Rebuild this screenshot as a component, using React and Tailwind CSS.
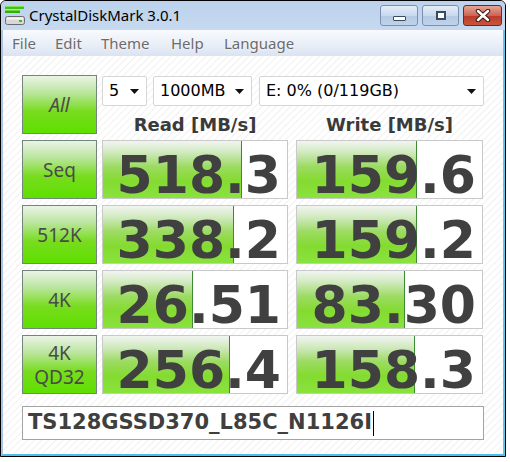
import React from "react";

const rows = [
  { label: ["Seq"], read: "518.3", rw: 139, write: "159.6", ww: 120 },
  { label: ["512K"], read: "338.2", rw: 131, write: "159.2", ww: 120 },
  { label: ["4K"], read: "26.51", rw: 90, write: "83.30", ww: 108 },
  { label: ["4K", "QD32"], read: "256.4", rw: 127, write: "158.3", ww: 118 },
];

function LabelBtn({ children, italic }) {
  return (
    <div
      className={`w-[75px] h-[59px] shrink-0 border border-[#74857a] bg-[linear-gradient(to_bottom,#eaf4e6_0%,#bde6a2_28%,#78dc1e_62%,#5ee000_100%)] flex flex-col items-center justify-center text-[19px] leading-[24px] text-[#4a4a4a] ${italic ? "italic" : ""}`}
      style={{ fontFamily: '"Noto Sans", "Liberation Sans", sans-serif' }}
    >
      {children}
    </div>
  );
}

function ValueBox({ value, width, w }) {
  return (
    <div className={`${w} h-[59px] shrink-0 relative border border-[#c9c9c9] bg-white`}>
      <div
        className="absolute left-0 top-0 bottom-0 border-r border-[#3f8a34] bg-[linear-gradient(to_bottom,#f2f5f1_0%,#d0e9be_20%,#9cdb62_45%,#84db30_70%,#8ae23e_100%)]"
        style={{ width: `${width}px` }}
      />
      <div
        className="relative h-full flex justify-end items-start pt-[8px] pr-[6px] text-[52px] leading-none font-bold text-[#404040]"
        style={{ fontFamily: '"DejaVu Sans", Verdana, sans-serif' }}
      >
        {value}
      </div>
    </div>
  );
}

function Arrow() {
  return (
    <svg width="9" height="5" viewBox="0 0 9 5" className="shrink-0">
      <path d="M0 0 H9 L4.5 5 Z" fill="#111" />
    </svg>
  );
}

function Dropdown({ text, w }) {
  return (
    <div
      className={`${w} h-[30px] shrink-0 bg-white border border-[#d6d6d6] rounded-[2px] flex items-center justify-between pl-[6px] pr-[7px] text-[16px] text-black`}
      style={{ fontFamily: '"DejaVu Sans", Verdana, sans-serif' }}
    >
      <span>{text}</span>
      <Arrow />
    </div>
  );
}

function AppIcon() {
  return (
    <svg width="20" height="20" viewBox="0 0 20 20" className="shrink-0">
      <rect x="0" y="1" width="19" height="3" fill="#3fc21a" />
      <rect x="0" y="1" width="19" height="1" fill="#7fe050" />
      <rect x="0" y="5" width="15" height="3" fill="#2fae12" />
      <rect x="0" y="5" width="15" height="1" fill="#6fd640" />
      <rect x="0.5" y="11.5" width="19" height="8" rx="2" fill="#d8d8d8" stroke="#6a6a6a" />
      <rect x="2" y="12.5" width="16" height="2" fill="#f4f4f4" />
      <rect x="14" y="15" width="3" height="2" fill="#35c21a" />
    </svg>
  );
}

export default function App() {
  return (
    <div className="w-[510px] h-[462px] bg-white relative overflow-hidden">
      <div className="w-[506px] h-[457px] border border-black rounded-t-[6px] overflow-hidden flex flex-col bg-[#c2d6ee]">
        {/* Title bar */}
        <div className="h-[29px] shrink-0 flex items-start bg-[linear-gradient(to_bottom,#bcd2ec,#c6d9ef)]">
          <div className="pl-[4px] pt-[4px]">
            <AppIcon />
          </div>
          <div
            className="ml-[4px] mt-[4px] text-[15px] leading-[20px] text-black"
            style={{ fontFamily: '"Noto Sans", "Open Sans", sans-serif' }}
          >
            CrystalDiskMark 3.0.1
          </div>
          <div className="ml-auto mr-[3px] mt-[4px] flex gap-[4px]">
            <div className="w-[38px] h-[21px] rounded-[3px] border border-[#7b90ae] bg-[linear-gradient(to_bottom,#e4edf8,#c9d9ed_50%,#b3c9e4_51%,#bfd3ea)] flex items-end justify-center pb-[4px]">
              <div className="w-[13px] h-[5px] bg-white border border-[#3a4a60] rounded-[1px]" />
            </div>
            <div className="w-[37px] h-[21px] rounded-[3px] border border-[#7b90ae] bg-[linear-gradient(to_bottom,#e4edf8,#c9d9ed_50%,#b3c9e4_51%,#bfd3ea)] flex items-center justify-center">
              <div className="w-[10px] h-[9px] border-[2px] border-[#3a4a60] bg-white" />
            </div>
            <div className="w-[39px] h-[21px] rounded-[3px] border border-[#6a2a22] bg-[linear-gradient(to_bottom,#e3a597,#cf6454_50%,#b93a28_51%,#c8553f)] flex items-center justify-center">
              <svg width="16" height="13" viewBox="0 0 16 13">
                <path d="M3 2 L13 11 M13 2 L3 11" stroke="#3a1a16" strokeWidth="4.5" strokeLinecap="round" />
                <path d="M3 2 L13 11 M13 2 L3 11" stroke="#ffffff" strokeWidth="2.5" strokeLinecap="round" />
              </svg>
            </div>
          </div>
        </div>
        {/* Menu + client with frame */}
        <div className="flex-1 flex flex-col border-l-2 border-l-[#a9c3e4] border-r-2 border-r-[#5cc6ec] border-b-2 border-b-[#4cc0ea]">
          <div
            className="h-[26px] shrink-0 flex items-center pl-[9px] text-[15px] text-[#6b6b6b] bg-[linear-gradient(to_bottom,#f8fafd,#e8eef7_60%,#dbe3f1)] [text-shadow:0_0_2px_#ffffff]"
            style={{ fontFamily: '"Noto Sans", "Open Sans", sans-serif' }}
          >
            <span className="w-[43px]">File</span>
            <span className="w-[46px]">Edit</span>
            <span className="w-[70px]">Theme</span>
            <span className="w-[53px]">Help</span>
            <span>Language</span>
          </div>
          <div className="flex-1 bg-[repeating-linear-gradient(135deg,#ffffff_0px,#ffffff_3px,#f1f1f1_4px,#ffffff_5px)] pt-[19px] pl-[19px] flex flex-col">
            <div className="flex flex-col gap-[6px]">
              {/* Top row */}
              <div className="flex gap-[5px]">
                <LabelBtn italic>All</LabelBtn>
                <div className="flex flex-col">
                  <div className="flex mt-[1px] h-[30px]">
                    <Dropdown text="5" w="w-[45px]" />
                    <div className="w-[6px]" />
                    <Dropdown text="1000MB" w="w-[99px]" />
                    <div className="w-[7px]" />
                    <Dropdown text="E: 0% (0/119GB)" w="w-[225px]" />
                  </div>
                  <div
                    className="flex h-[28px] pt-[10px] text-[18px] leading-none font-bold text-[#3a3a3a]"
                    style={{ fontFamily: '"DejaVu Sans", Verdana, sans-serif' }}
                  >
                    <div className="w-[186px] text-center">Read [MB/s]</div>
                    <div className="w-[8px]" />
                    <div className="w-[187px] text-center">Write [MB/s]</div>
                  </div>
                </div>
              </div>
              {rows.map((r, i) => (
                <div key={i} className="flex">
                  <LabelBtn>
                    {r.label.map((l) => (
                      <span key={l}>{l}</span>
                    ))}
                  </LabelBtn>
                  <div className="w-[5px]" />
                  <ValueBox value={r.read} width={r.rw} w="w-[186px]" />
                  <div className="w-[8px]" />
                  <ValueBox value={r.write} width={r.ww} w="w-[187px]" />
                </div>
              ))}
            </div>
            <div
              className="mt-[12px] w-[462px] h-[34px] border border-[#a3a3a3] bg-white flex items-center pl-[5px] text-[21px] font-bold text-[#3f3f3f]"
              style={{ fontFamily: '"DejaVu Sans", Verdana, sans-serif' }}
            >
              <span>TS128GSSD370_L85C_N1126I</span>
              <span className="w-[1px] h-[25px] bg-black ml-[1px]" />
            </div>
          </div>
        </div>
      </div>
    </div>
  );
}
